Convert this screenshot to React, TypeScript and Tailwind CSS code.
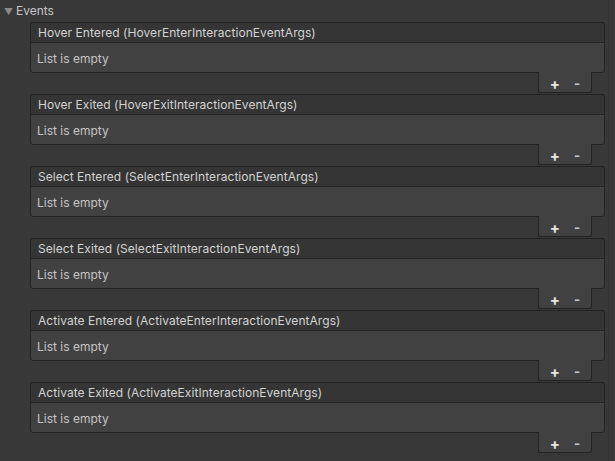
import React from "react";

const events = [
  "Hover Entered (HoverEnterInteractionEventArgs)",
  "Hover Exited (HoverExitInteractionEventArgs)",
  "Select Entered (SelectEnterInteractionEventArgs)",
  "Select Exited (SelectExitInteractionEventArgs)",
  "Activate Entered (ActivateEnterInteractionEventArgs)",
  "Activate Exited (ActivateExitInteractionEventArgs)",
];

function EventList({ title }: { title: string }) {
  return (
    <div className="flex flex-col shrink-0">
      <div className="shrink-0 h-[20px] border-t border-x border-[#232323] rounded-t-[3px] bg-[#353535] flex items-center pl-[7px] text-[12px] tracking-[0.05px] text-[#d2d2d2] leading-none">
        {title}
      </div>
      <div className="shrink-0 h-[31px] border border-[#232323] rounded-b-[3px] bg-[#414141] flex items-center pl-[6px] pt-[3px] text-[12px] text-[#c4c4c4] leading-none">
        List is empty
      </div>
      <div className="shrink-0 flex justify-end pr-[13px]">
        <div className="w-[54px] h-[21px] border-x border-b border-[#232323] rounded-b-[3px] bg-[#414141] flex items-center justify-center gap-[14px] -mt-px pt-[3px]">
          <span className="text-[#e6e6e6] font-bold text-[15px] leading-none">+</span>
          <span className="text-[#c8c8c8] font-bold text-[13px] leading-none">-</span>
        </div>
      </div>
    </div>
  );
}

export default function App() {
  return (
    <div
      className="w-[615px] h-[461px] bg-[#383838] overflow-hidden flex"
      style={{ fontFamily: "Inter, 'Noto Sans', sans-serif" }}
    >
      <div className="flex-1 flex flex-col">
        <div className="shrink-0 h-[22px] flex items-center pl-[4px] text-[12px] text-[#c4c4c4] leading-none">
          <span className="text-[#8a8a8a] text-[9px] w-[12px]">▼</span>
          <span>Events</span>
        </div>
        <div className="shrink-0 flex flex-col gap-px pl-[30px] pr-[3px]">
          {events.map((e) => (
            <EventList key={e} title={e} />
          ))}
        </div>
        <div className="shrink-0 h-[22px] flex items-center pl-[4px] text-[12px] text-[#c4c4c4] leading-none pt-[6px]">
          <span className="text-[#8a8a8a] text-[9px] w-[12px]">▶</span>
          <span>Advanced Options</span>
        </div>
      </div>
      <div className="w-[7px] bg-[#383838] border-l border-[#333333]" />
    </div>
  );
}
